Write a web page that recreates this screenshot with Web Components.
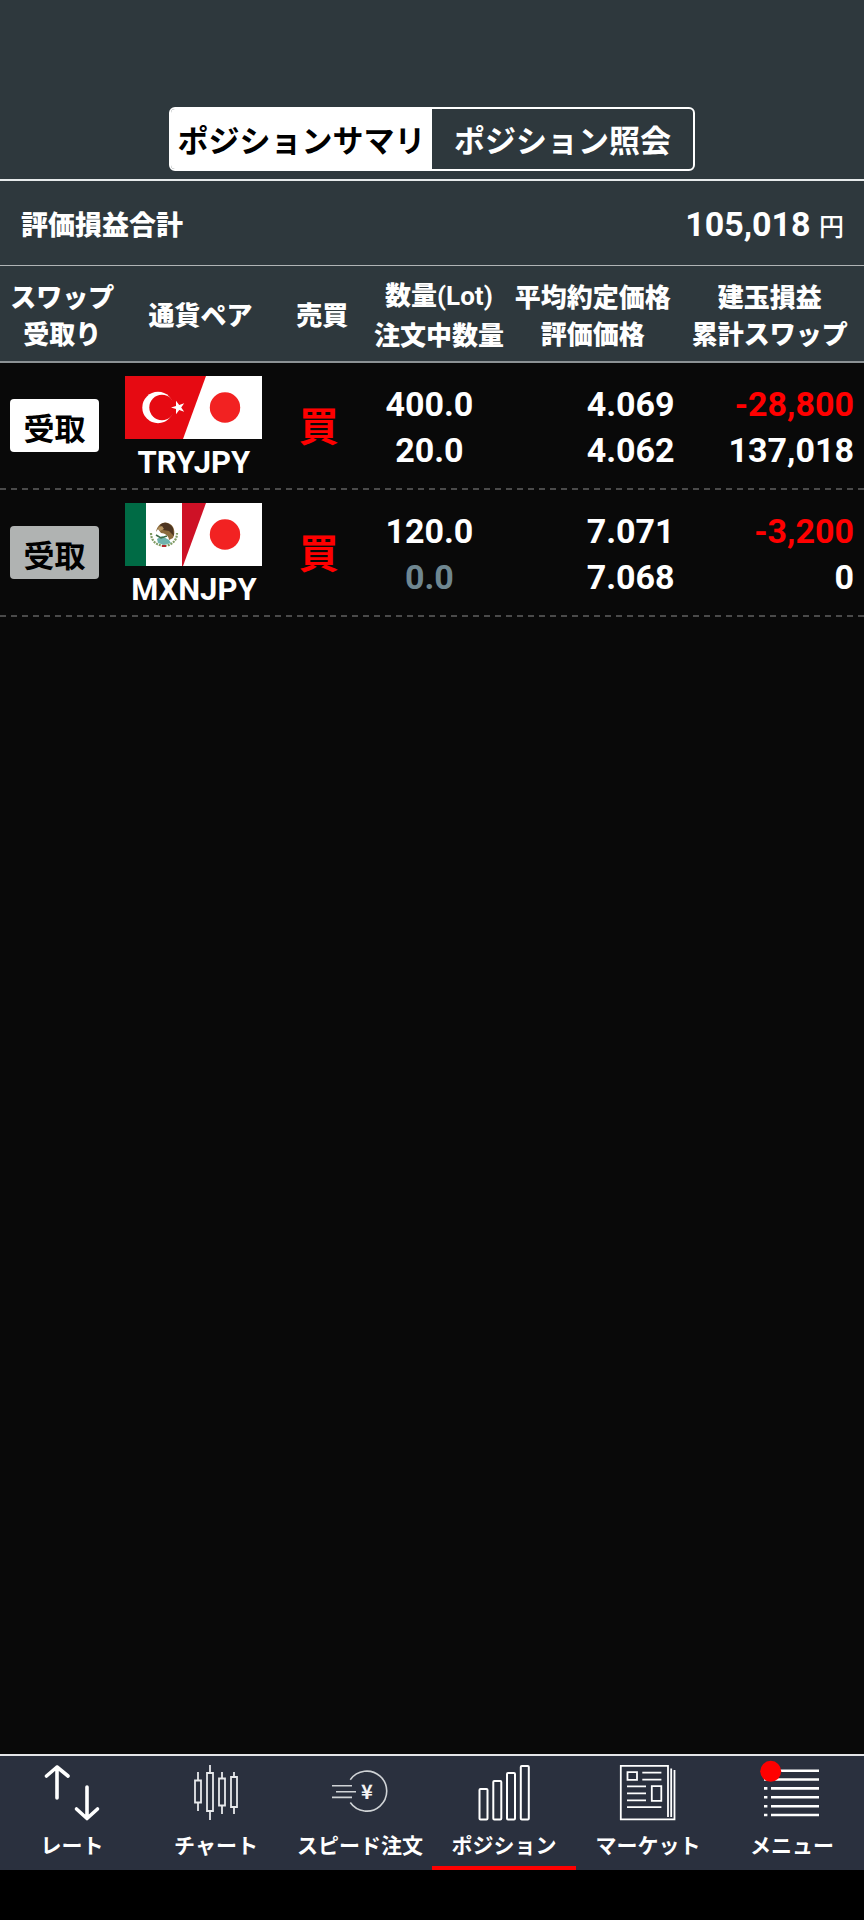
<!DOCTYPE html>
<html lang="ja">
<head>
<meta charset="utf-8">
<meta name="viewport" content="width=device-width, initial-scale=1">
<title>ポジションサマリ</title>
<style>
html, body {
  margin: 0;
  background: #000;
}
body {
  font-family: Roboto, 'Noto Sans CJK JP', sans-serif;
  color: #fff;
  --jp: 'Noto Sans CJK JP', sans-serif;
  --panel: #2e383d;
}
</style>
</head>
<body>
<position-screen>
  <segment-tabs slot="header" labels="ポジションサマリ,ポジション照会" active="0"></segment-tabs>
  <summary-bar amount="105,018" unit="円">評価損益合計</summary-bar>
  <position-table></position-table>
  <tab-bar slot="footer">
    <tab-item icon="rate">レート</tab-item>
    <tab-item icon="chart">チャート</tab-item>
    <tab-item icon="speed">スピード注文</tab-item>
    <tab-item icon="position" active>ポジション</tab-item>
    <tab-item icon="market">マーケット</tab-item>
    <tab-item icon="menu">メニュー</tab-item>
  </tab-bar>
</position-screen>

<script>
/**
 * Attaches an open shadow root filled with the given markup.
 *
 * @param {HTMLElement} host - The custom element.
 * @param {string} html - Styles and markup.
 * @returns {ShadowRoot} The shadow root.
 */
function render (host, html) {
  const template = document.createElement('template')
  template.innerHTML = html
  const root = host.shadowRoot || host.attachShadow({ mode: 'open' })
  root.replaceChildren(template.content.cloneNode(true))
  return root
}

// Tab icons, all drawn on a 56x56 grid.
const ICONS = {
  rate: `
    <g stroke-width="3.6" stroke-linecap="round" stroke-linejoin="round">
      <path d="M13 33V2M2.500 11L13 2L24 11"/>
      <path d="M43 22V53M32.500 44L43 53.500L53.500 44"/>
    </g>`,
  chart: `
    <g stroke-width="1.800" stroke="#e6e8ea">
      <path d="M10 7V15M10 38V46M22 0V8M22 46V55M34 7V13M34 41V49M46 7V12M46 42V49"/>
      <path d="M7 15.500h6v22h-6zM19 8h6v38h-6zM31 13.500h6v27h-6zM43 12h6v30h-6z"/>
    </g>`,
  speed: `
    <g stroke-width="1.600" stroke="#d0d3d6">
      <path d="M18.300 14.700A20 20 0 1 1 18.300 37.500"/>
      <path d="M0 20.700H20M4 26.700H24M0 32.400H20"/>
    </g>
    <text x="35" y="34" text-anchor="middle" font-size="20" font-weight="700" fill="#f4f4f4" stroke="none">¥</text>`,
  position: `
    <g stroke-width="2">
      <rect x="3.500" y="24" width="8" height="30.500" rx="1"/>
      <rect x="17.300" y="16" width="8" height="38.500" rx="1"/>
      <rect x="31" y="8" width="8" height="46.500" rx="1"/>
      <rect x="44.800" y="1" width="8" height="53.500" rx="1"/>
    </g>`,
  market: `
    <g stroke-width="1.800">
      <path d="M48 52V.800H.800V54.300H54.500V5M51.200 3.500V52"/>
      <path d="M7.500 7.200h9.500v7.600h-9.500zM31.800 21.200h9.500v14.600h-9.500z"/>
      <path d="M22.300 7.700H41.400M22.300 14.700H41.400M7 21.300H26M7 28.300H26M7 35.300H26M7 42.200H41.400"/>
    </g>`,
  menu: `
    <path stroke-width="2.600" d="M7 5.700H55M7 14.500H55M7 23.400H55M7 32.300H55M7 41.200H55M7 50H55"/>
    <path stroke-width="2.600" d="M0 14.500H3.400M0 23.400H3.400M0 32.300H3.400M0 41.200H3.400M0 50H3.400"/>
    <circle cx="6.700" cy="6.300" r="10.500" fill="#f00" stroke="none"/>`
}

// Left part of the pair flag, the yen side is shared.
const FLAGS = {
  TRY: `
    <path fill="#e60a12" d="M0 0H81L58 63H0z"/>
    <circle cx="33" cy="31.500" r="15.700" fill="#fff"/>
    <circle cx="37" cy="31.500" r="12.700" fill="#e60a12"/>
    <path fill="#fff" d="M46 31.500L51 29.900V24.800L54.200 28.900L59.200 27.300L56.200 31.500L59.200 35.700L54.200 34.100L51 38.200V33.100z"/>`,
  MXN: `
    <path fill="#006b45" d="M0 0H21V63H0z"/>
    <path fill="#ce1126" d="M57 0H81L58 63H57z"/>
    <path fill="none" stroke="#7f9a62" stroke-width="2.200" stroke-dasharray="2 1" d="M26 30C26 47 52 47 52 30"/>
    <path fill="#8c6b3d" d="M31 29C32 22 38 18 43 20C49 22 51 29 48 35L44 37C44 33 40 30 36 30L33 26z"/>
    <path fill="#4d3521" d="M35 22C39 18 45 20 48 25L49 33L44 28L38 27z"/>
    <path fill="#b59461" d="M33 25L37 23L39 26L35 28z"/>
    <path fill="#6fb3ad" d="M32 36L37 33L44 37L46 40L39 42L33 40z"/>
    <path fill="none" stroke="#3d6b45" stroke-width="1.500" d="M31 32L36 35L42 33"/>
    <path fill="#b3272d" d="M37 42h4v2h-4z"/>`
}

const POSITIONS = [
  { pair: 'TRYJPY', side: '買', lot: '400.0', pending: '20.0', avg: '4.069', rate: '4.062', profit: '-28,800', swap: '137,018', receivable: true },
  { pair: 'MXNJPY', side: '買', lot: '120.0', pending: '0.0', avg: '7.071', rate: '7.068', profit: '-3,200', swap: '0', receivable: false }
]

/**
 * Page frame: header, scrolling content and footer.
 */
customElements.define('position-screen', class extends HTMLElement {
  connectedCallback () {
    render(this, `
<style>
:host {
  display: flex;
  flex-direction: column;
  min-height: 100vh;
  box-sizing: border-box;
  padding-bottom: 50px;
}
header {
  display: flex;
  padding: 107px 169px 8px;
  background: var(--panel);
  border-bottom: 2px solid #e6eaeb;
}
main {
  flex: 1;
  background: #090909;
}
</style>
<header><slot name="header"></slot></header>
<main><slot></slot></main>
<slot name="footer"></slot>`)
  }
})

/**
 * Segmented control at the top of the page.
 */
customElements.define('segment-tabs', class extends HTMLElement {
  connectedCallback () {
    const active = Number(this.getAttribute('active'))
    const buttons = this.getAttribute('labels').split(',')
      .map((label, i) => `<button type="button" aria-pressed="${i === active}">${label}</button>`)
      .join('')
    const root = render(this, `
<style>
:host {
  display: grid;
  grid-template-columns: 1fr 1fr;
  flex: 1;
  height: 64px;
  box-sizing: border-box;
  border: 2px solid #fff;
  border-radius: 6px;
  overflow: hidden;
}
button {
  padding: 0;
  border: 0;
  background: none;
  color: #fff;
  font: 700 31px/60px var(--jp);
  white-space: nowrap;
}
button[aria-pressed=true] {
  background: #fff;
  color: #000;
}
</style>
${buttons}`)
    const all = root.querySelectorAll('button')
    all.forEach(button => {
      button.addEventListener('click', () => {
        all.forEach(b => b.setAttribute('aria-pressed', b === button))
      })
    })
  }
})

/**
 * Total profit line.
 */
customElements.define('summary-bar', class extends HTMLElement {
  connectedCallback () {
    render(this, `
<style>
:host {
  display: flex;
  align-items: center;
  justify-content: space-between;
  height: 82px;
  padding: 2px 20px 0 21px;
  background: var(--panel);
  border-bottom: 1px solid #b0b4b6;
  font: 900 27px/40px var(--jp);
}
.amount {
  font: 700 34px/40px Roboto, var(--jp);
}
small {
  font: 500 25px/40px var(--jp);
}
</style>
<slot></slot>
<span class="amount">${this.getAttribute('amount')} <small>${this.getAttribute('unit')}</small></span>`)
  }
})

/**
 * Flags of a currency pair against the yen, with its name below.
 */
customElements.define('pair-flag', class extends HTMLElement {
  connectedCallback () {
    const pair = this.getAttribute('pair')
    render(this, `
<style>
:host {
  display: block;
  width: 137px;
  text-align: center;
  font: 700 31px/36px Roboto, sans-serif;
}
svg {
  display: block;
  margin-bottom: 6px;
}
</style>
<svg width="137" height="63" viewBox="0 0 137 63" aria-hidden="true">
  <path fill="#fff" d="M0 0H137V63H0z"/>
  ${FLAGS[pair.slice(0, 3)]}
  <circle cx="100" cy="31.500" r="15.200" fill="#f22222"/>
</svg>
<slot></slot>`)
  }
})

/**
 * Table of the open positions.
 */
customElements.define('position-table', class extends HTMLElement {
  connectedCallback () {
    render(this, `
<style>
:host {
  display: block;
}
table {
  width: 100%;
  table-layout: fixed;
  border-collapse: separate;
  border-spacing: 0;
}
th {
  height: 95px;
  padding: 0;
  background: var(--panel);
  border-bottom: 2px solid #8b9194;
  font: 900 26px/37px var(--jp);
  white-space: nowrap;
}
.unit {
  font-family: Roboto, sans-serif;
  font-weight: 700;
}
td {
  height: 127px;
  box-sizing: border-box;
  padding: 0;
  font: 700 34px/46px Roboto, sans-serif;
  text-align: right;
}
tbody tr {
  background: repeating-linear-gradient(90deg, #4a4a4a 0 6px, transparent 6px 11px) left bottom / 100% 2px no-repeat;
}
td.swap {
  padding-left: 10px;
  padding-bottom: 2px;
  text-align: left;
}
td.pair {
  padding-left: 1px;
  padding-top: 4px;
}
td.side {
  padding-right: 7px;
  padding-bottom: 5px;
  text-align: center;
  color: #f00;
  font: 700 40px/46px var(--jp);
}
td.lot {
  padding-right: 19px;
  text-align: center;
}
td.price {
  padding-right: 1px;
}
td.profit {
  padding-right: 10px;
}
.minus {
  color: #f00;
}
.zero {
  color: #6f8791;
}
button {
  display: block;
  width: 89px;
  height: 53px;
  padding: 2px 0 0;
  border: 0;
  border-radius: 4px;
  background: #fff;
  color: #000;
  font: 700 31px/51px var(--jp);
}
button:disabled {
  background: #b0b3b2;
}
</style>
<table>
  <colgroup>
    <col style="width:14.4%"><col style="width:17.6%"><col style="width:10.6%">
    <col style="width:16.4%"><col style="width:19.2%"><col style="width:21.8%">
  </colgroup>
  <thead>
    <tr>
      <th>スワップ<br>受取り</th>
      <th>通貨ペア</th>
      <th>売買</th>
      <th>数量<span class="unit">(Lot)</span><br>注文中数量</th>
      <th>平均約定価格<br>評価価格</th>
      <th>建玉損益<br>累計スワップ</th>
    </tr>
  </thead>
  <tbody>${POSITIONS.map(p => this._row(p)).join('')}</tbody>
</table>`)
  }

  /**
   * Markup of one position.
   *
   * @param {object} p - The position.
   * @returns {string} A table row.
   */
  _row (p) {
    return `
<tr>
  <td class="swap"><button type="button" ${p.receivable ? '' : 'disabled'}>受取</button></td>
  <td class="pair"><pair-flag pair="${p.pair}">${p.pair}</pair-flag></td>
  <td class="side">${p.side}</td>
  <td class="lot">${p.lot}<br><span class="${Number(p.pending) ? '' : 'zero'}">${p.pending}</span></td>
  <td class="price">${p.avg}<br>${p.rate}</td>
  <td class="profit"><span class="${p.profit.startsWith('-') ? 'minus' : ''}">${p.profit}</span><br>${p.swap}</td>
</tr>`
  }
})

/**
 * Bottom navigation.
 */
customElements.define('tab-bar', class extends HTMLElement {
  connectedCallback () {
    render(this, `
<style>
:host {
  display: block;
  background: #2a303e;
  border-top: 2px solid #e4e5e8;
}
nav {
  display: grid;
  grid-template-columns: repeat(6, 1fr);
}
</style>
<nav><slot></slot></nav>`)
  }
})

/**
 * One entry of the bottom navigation.
 */
customElements.define('tab-item', class extends HTMLElement {
  connectedCallback () {
    render(this, `
<style>
:host {
  display: block;
}
a {
  display: flex;
  flex-direction: column;
  align-items: center;
  gap: 8px;
  padding: 9px 0 7px;
  border-bottom: 4px solid transparent;
  color: #fff;
  text-decoration: none;
  font: 700 21px/30px var(--jp);
  white-space: nowrap;
}
:host([active]) a {
  border-color: #f00;
}
svg {
  fill: none;
  stroke: #fff;
  overflow: visible;
}
</style>
<a href="#${this.getAttribute('icon')}">
  <svg width="56" height="56" viewBox="0 0 56 56" aria-hidden="true">${ICONS[this.getAttribute('icon')]}</svg>
  <span><slot></slot></span>
</a>`)
  }
})
</script>
</body>
</html>
